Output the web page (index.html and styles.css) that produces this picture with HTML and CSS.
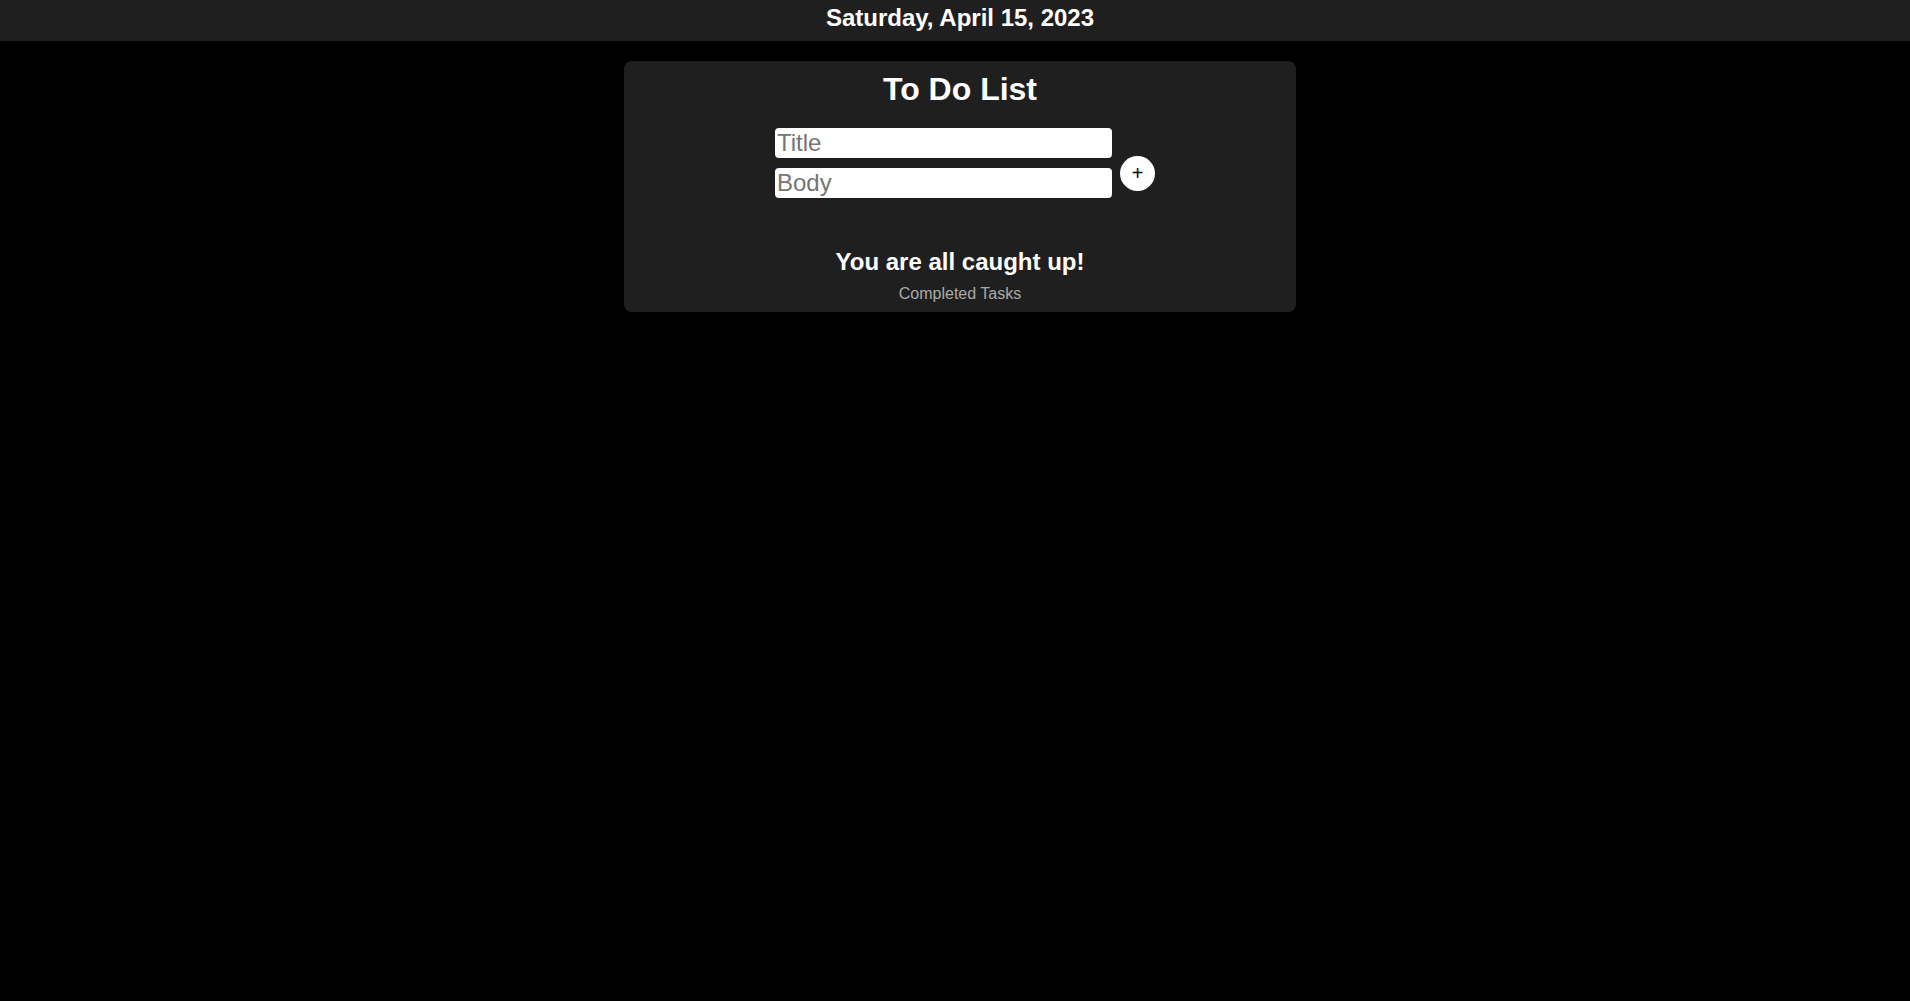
FILE: index.html
```html
<!DOCTYPE html>
<html lang="en">
<head>
<meta charset="utf-8">
<title>To Do List</title>
<link rel="stylesheet" href="styles.css">
</head>
<body>
<header class="topbar">
  <h2 class="date">Saturday, April 15, 2023</h2>
</header>
<main class="page">
  <section class="card">
    <h1 class="card-title">To Do List</h1>
    <form class="task-form">
      <div class="fields">
        <input class="field" type="text" placeholder="Title">
        <input class="field" type="text" placeholder="Body">
      </div>
      <button class="add-btn" type="button">+</button>
    </form>
    <h2 class="status">You are all caught up!</h2>
    <div class="completed">Completed Tasks</div>
  </section>
</main>
</body>
</html>
```

FILE: styles.css
```css
html, body {
  margin: 0;
  background: #000;
  font-family: "Liberation Sans", Arial, sans-serif;
  color: #fff;
}

.topbar {
  background: #1f1f1f;
  height: 41px;
  box-sizing: border-box;
  padding: 4px 0 0 10px;
  text-align: center;
}

.date {
  margin: 0;
  font-size: 24px;
  font-weight: bold;
  line-height: normal;
}

.page {
  padding-left: 10px;
}

.card {
  width: 672px;
  margin: 20px auto 0;
  box-sizing: border-box;
  padding: 10px 0 9px;
  background: #1f1f1f;
  border-radius: 8px;
  text-align: center;
}

.card-title {
  margin: 0;
  font-size: 32px;
  font-weight: bold;
  line-height: normal;
}

.task-form {
  display: flex;
  justify-content: center;
  align-items: center;
  margin: 20px 0 0;
  padding-left: 10px;
}

.fields {
  display: flex;
  flex-direction: column;
  gap: 10px;
}

.field {
  width: 337px;
  height: 30px;
  box-sizing: border-box;
  border: none;
  border-radius: 4px;
  padding: 1px 2px;
  font-family: "Liberation Sans", Arial, sans-serif;
  font-size: 24px;
  background: #fff;
  color: #000;
  outline: none;
}

.field::placeholder {
  color: #757575;
}

.add-btn {
  width: 35px;
  height: 35px;
  margin: 20px 0 0 8px;
  padding: 0;
  border: none;
  border-radius: 50%;
  background: #fff;
  color: #000;
  font-family: "Liberation Sans", Arial, sans-serif;
  font-size: 20px;
  line-height: 35px;
  cursor: pointer;
}

.status {
  margin: 50px 0 0;
  font-size: 24px;
  font-weight: bold;
  line-height: normal;
}

.completed {
  margin-top: 9px;
  font-size: 16px;
  line-height: normal;
  color: #aaaaaa;
}
```
